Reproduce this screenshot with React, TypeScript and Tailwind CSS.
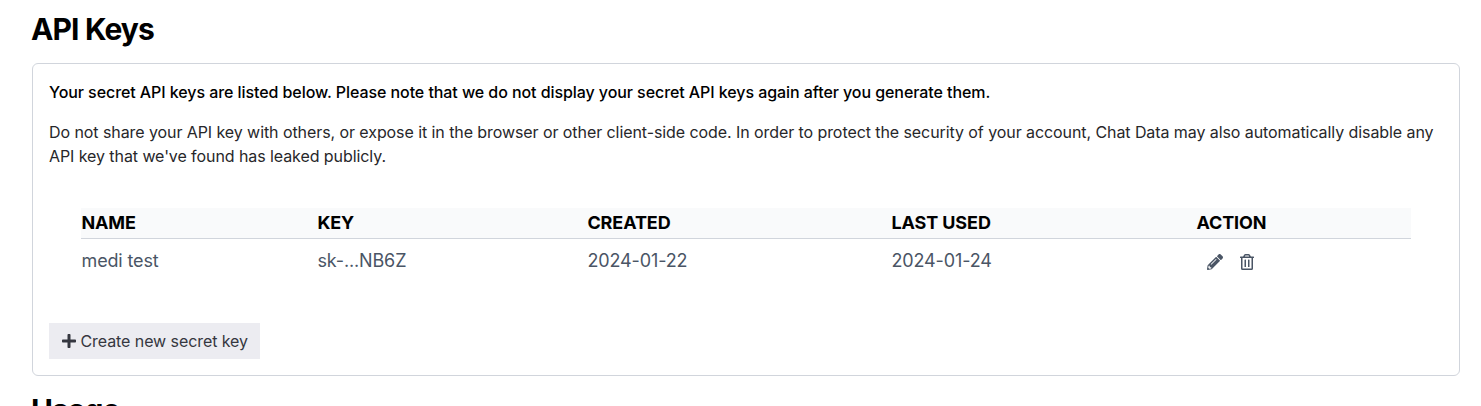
import { FaPlus, FaPencilAlt, FaRegTrashAlt } from "react-icons/fa";

const keys = [{ name: "medi test", key: "sk-...NB6Z", created: "2024-01-22", used: "2024-01-24" }];

export default function App() {
  return (
    <main className="h-[406px] overflow-hidden bg-white pl-8 pr-[21px] pt-[9px] font-['Inter',sans-serif] text-black">
      <h1 className="-ml-px text-[30px] font-bold leading-10 tracking-[-0.87px]">API Keys</h1>
      <section className="mt-3.5 h-[313px] rounded-md border border-gray-300 px-4 pt-4">
        <p className="text-base font-medium leading-6 tracking-[-0.073px]">
          Your secret API keys are listed below. Please note that we do not display your secret API keys again after you generate them.
        </p>
        <p className="mt-4 text-base leading-6 tracking-[-0.078px] text-zinc-800">
          Do not share your API key with others, or expose it in the browser or other client-side code. In order to protect the security of your account, Chat Data may also automatically disable any API key that we've found has leaked publicly.
        </p>
        <div className="mx-8 mt-10">
          <div className="grid h-[31px] grid-cols-[236px_270px_304px_305px_1fr] items-center border-b border-gray-300 bg-gray-50 pl-[0.4px] text-lg font-bold tracking-[-0.1px]">
            <span>NAME</span>
            <span>KEY</span>
            <span>CREATED</span>
            <span>LAST USED</span>
            <span>ACTION</span>
          </div>
          {keys.map((k) => (
            <div key={k.key} className="grid h-11 grid-cols-[236px_270px_304px_305px_1fr] items-center pl-[0.5px] text-lg tracking-[-0.14px] text-gray-600">
              <span>{k.name}</span>
              <span>{k.key}</span>
              <span>{k.created}</span>
              <span>{k.used}</span>
              <span className="flex gap-4 pl-2.5 pt-0.5">
                <FaPencilAlt size={16} />
                <FaRegTrashAlt size={16} />
              </span>
            </div>
          ))}
        </div>
        <button className="mt-10 flex h-9 w-[211px] items-center gap-[3.5px] bg-[#ececf1] pl-3 text-base tracking-[-0.08px] text-[#353740]">
          <FaPlus size={16} />
          Create new secret key
        </button>
      </section>
      <h1 className="-ml-px mt-3.5 text-[30px] font-bold leading-10 tracking-[-0.9px]">Usage</h1>
    </main>
  );
}
